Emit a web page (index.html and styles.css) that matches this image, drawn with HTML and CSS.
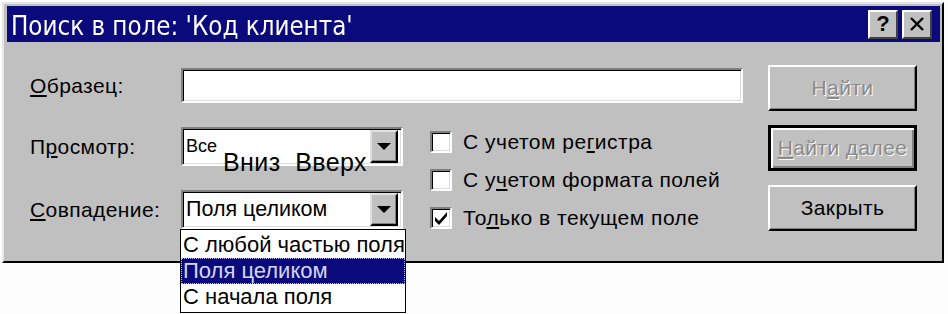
FILE: index.html
```html
<!DOCTYPE html>
<html lang="ru">
<head>
  <meta charset="UTF-8" />
  <title>Поиск в поле</title>
  <link rel="stylesheet" href="styles.css">
</head>
<body>

  <div class="dialog">
    <div class="titlebar">
      <span class="title">Поиск в поле: 'Код клиента'</span>
      <div class="title-btns">
        <span class="tbtn">?</span>
        <span class="tbtn">
          <svg width="16" height="14" viewBox="0 0 16 14"><path d="M2 1 L14 13 M14 1 L2 13" stroke="#000" stroke-width="2.4" fill="none"/></svg>
        </span>
      </div>
    </div>

    <div class="body">
      <div class="form">
        <label class="lbl row1"><u>О</u>бразец:</label>
        <div class="field row1"></div>

        <label class="lbl row2">П<u>р</u>осмотр:</label>
        <div class="select row2">
          <span class="value small">Все</span>
          <span class="arrow"></span>
          <span class="ghost">Вниз&nbsp; Вверх</span>
        </div>

        <label class="lbl row3"><u>С</u>овпадение:</label>
        <div class="select row3">
          <span class="value">Поля целиком</span>
          <span class="arrow"></span>
          <ul class="list">
            <li>С любой частью поля</li>
            <li class="selected">Поля целиком</li>
            <li>С начала поля</li>
          </ul>
        </div>

        <!-- флажки -->
        <div class="checks">
          <div class="check"><span class="box"></span><span>С учетом ре<u>г</u>истра</span></div>
          <div class="check"><span class="box"></span><span>С у<u>ч</u>етом формата полей</span></div>
          <div class="check"><span class="box"><svg width="16" height="16" viewBox="0 0 16 16"><path d="M2 7 L6 11 L14 2 L14 6 L6 15 L2 11 Z" fill="#000"/></svg></span><span>То<u>л</u>ько в текущем поле</span></div>
        </div>
      </div>

      <div class="buttons">
        <button class="disabled">Н<u>а</u>йти</button>
        <button class="disabled default"><u>Н</u>айти далее</button>
        <button>Закрыть</button>
      </div>
    </div>
  </div>

</body>
</html>
```

FILE: styles.css
```css
* {
  box-sizing: border-box;
  margin: 0;
  padding: 0;
}

body {
  font-family: 'Liberation Sans', Arial, sans-serif;
  background: #fdfdfd;
  color: #000;
  width: 948px;
  height: 314px;
  overflow: hidden;
}

.dialog {
  margin: 2px 0 0 2px;
  width: 942px;
  background: #c0c0c0;
  border: 2px solid;
  border-color: #e6e6e6 #000 #000 #e6e6e6;
  padding: 2px 2px 2px 3px;
}

.titlebar {
  height: 36px;
  background: #0a0a7c;
  display: flex;
  align-items: center;
  justify-content: space-between;
  padding: 0 8px 0 4px;
}

.title {
  font-family: 'DejaVu Sans Condensed', 'DejaVu Sans', sans-serif;
  font-size: 27px;
  color: #fff;
  padding-top: 2px;
  transform: scaleX(0.95);
  transform-origin: left center;
  white-space: nowrap;
}

.title-btns {
  display: flex;
  gap: 4px;
}

.tbtn {
  width: 30px;
  height: 29px;
  background: #c0c0c0;
  border: 2px solid;
  border-color: #fff #404040 #404040 #fff;
  display: flex;
  align-items: center;
  justify-content: center;
  font-weight: bold;
  font-size: 22px;
}

.body {
  display: flex;
  padding: 23px 23px 28px 23px;
  gap: 25px;
}

.form {
  margin-top: 3px;
  display: grid;
  grid-template-columns: 151px 222px 27px 313px;
  grid-template-rows: 35px 39px 39px;
  row-gap: 24px;
  align-self: flex-start;
}

.row1 { grid-row: 1; }
.row2 { grid-row: 2; }
.row3 { grid-row: 3; }

.lbl {
  grid-column: 1;
  font-size: 21px;
  display: flex;
  align-items: center;
  letter-spacing: 0.4px;
}

.field,
.select {
  background: #fff;
  border: 2px solid;
  border-color: #808080 #fff #fff #808080;
  box-shadow: inset 1px 1px 0 #000, inset -1px -1px 0 #dcdcdc;
}

.field {
  grid-column: 2 / 5;
}

.select {
  grid-column: 2;
  position: relative;
  display: flex;
  align-items: center;
  padding: 0 3px 0 3px;
}

.value {
  font-size: 21.5px;
  flex: 1;
}

.value.small {
  font-size: 18px;
  align-self: flex-start;
  padding-top: 7px;
}

.arrow {
  width: 28px;
  height: 33px;
  background: #c0c0c0;
  border: 2px solid;
  border-color: #e0e0e0 #000 #000 #e0e0e0;
  box-shadow: inset -1px -1px 0 #808080;
  position: relative;
}

.arrow::after {
  content: '';
  position: absolute;
  left: 5px;
  top: 11px;
  border-left: 7px solid transparent;
  border-right: 7px solid transparent;
  border-top: 7px solid #000;
}

.ghost {
  position: absolute;
  left: 40px;
  top: 19px;
  font-size: 25px;
  white-space: nowrap;
  letter-spacing: 0.4px;
}

.list {
  position: absolute;
  left: -3px;
  top: 37px;
  width: 226px;
  list-style: none;
  background: #fff;
  border: 1px solid #000;
  padding: 2px 0;
  overflow: hidden;
  z-index: 2;
}

.list li {
  font-size: 22px;
  height: 26px;
  line-height: 25px;
  padding-left: 2px;
  white-space: nowrap;
}

.list li.selected {
  background: #0a0a7c;
  color: #d6d6f2;
  outline: 1px dotted #c0c0ff;
  outline-offset: -1px;
}

.checks {
  grid-column: 4;
  grid-row: 2 / 4;
  margin-top: -4px;
  display: flex;
  flex-direction: column;
}

.check {
  flex-shrink: 0;
  height: 38px;
  display: flex;
  align-items: center;
  gap: 11px;
  font-size: 21px;
  letter-spacing: 0.5px;
}

.box {
  width: 22px;
  height: 22px;
  background: #fff;
  border: 2px solid;
  border-color: #808080 #fff #fff #808080;
  box-shadow: inset 1px 1px 0 #000, inset -1px -1px 0 #dcdcdc;
  display: flex;
  align-items: center;
  justify-content: center;
}

.buttons {
  display: flex;
  flex-direction: column;
  gap: 14px;
}

button {
  width: 149px;
  height: 46px;
  background: #c0c0c0;
  border: 2px solid;
  border-color: #fff #000 #000 #fff;
  box-shadow: inset -1px -1px 0 #808080;
  font-family: 'Liberation Sans', Arial, sans-serif;
  font-size: 21px;
  letter-spacing: 0.4px;
  color: #000;
}

button.disabled {
  color: #8a8a8a;
  text-shadow: 1px 1px 0 #fff;
}

button.default {
  border: 3px solid #000;
  box-shadow: inset 2px 2px 0 #fff, inset -2px -2px 0 #808080;
}
```
